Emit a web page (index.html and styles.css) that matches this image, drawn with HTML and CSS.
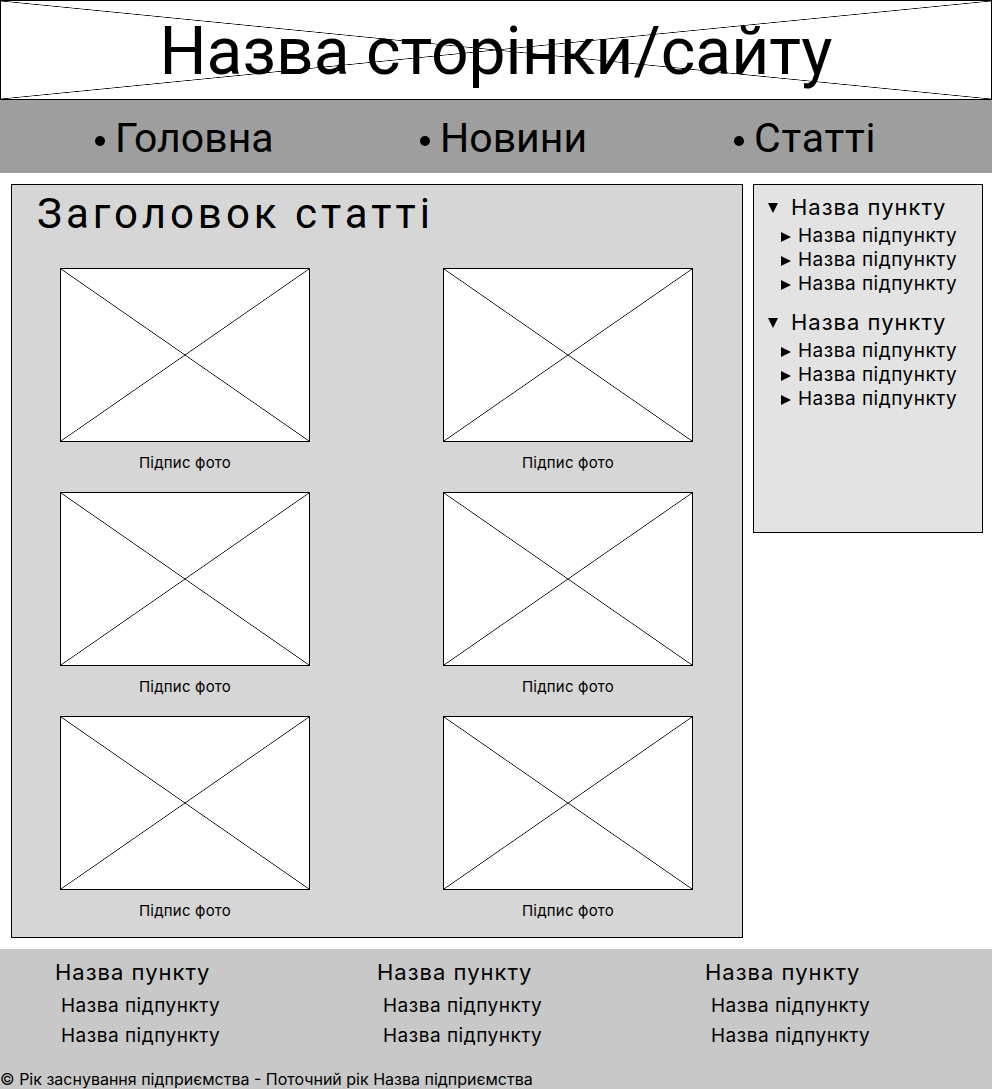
FILE: index.html
```html
<!DOCTYPE html>
<html lang="uk">
<head>
    <meta charset="UTF-8">
    <meta name="viewport" content="width=device-width, initial-scale=1.0">
    <title>Назва сторінки/сайту</title>
    <link rel="stylesheet" href="styles.css">
</head>
<body>

    <!-- Шапка -->
    <header class="site-header placeholder">
        <h1>Назва сторінки/сайту</h1>
    </header>

    <!-- Меню -->
    <nav class="main-nav">
        <ul>
            <li>Головна</li>
            <li>Новини</li>
            <li>Статті</li>
        </ul>
    </nav>

    <div class="layout">
        <!-- Стаття -->
        <main class="article">
            <h2>Заголовок статті</h2>
            <div class="gallery">
                <figure><div class="photo placeholder"></div><figcaption>Підпис фото</figcaption></figure>
                <figure><div class="photo placeholder"></div><figcaption>Підпис фото</figcaption></figure>
                <figure><div class="photo placeholder"></div><figcaption>Підпис фото</figcaption></figure>
                <figure><div class="photo placeholder"></div><figcaption>Підпис фото</figcaption></figure>
                <figure><div class="photo placeholder"></div><figcaption>Підпис фото</figcaption></figure>
                <figure><div class="photo placeholder"></div><figcaption>Підпис фото</figcaption></figure>
            </div>
        </main>

        <!-- Бічне меню -->
        <aside class="sidebar">
            <div class="group">
                <div class="group-title">Назва пункту</div>
                <ul>
                    <li>Назва підпункту</li>
                    <li>Назва підпункту</li>
                    <li>Назва підпункту</li>
                </ul>
            </div>
            <div class="group">
                <div class="group-title">Назва пункту</div>
                <ul>
                    <li>Назва підпункту</li>
                    <li>Назва підпункту</li>
                    <li>Назва підпункту</li>
                </ul>
            </div>
        </aside>
    </div>

    <!-- Підвал -->
    <footer class="site-footer">
        <div class="footer-cols">
            <div class="footer-col">
                <div class="footer-title">Назва пункту</div>
                <div class="footer-link">Назва підпункту</div>
                <div class="footer-link">Назва підпункту</div>
            </div>
            <div class="footer-col">
                <div class="footer-title">Назва пункту</div>
                <div class="footer-link">Назва підпункту</div>
                <div class="footer-link">Назва підпункту</div>
            </div>
            <div class="footer-col">
                <div class="footer-title">Назва пункту</div>
                <div class="footer-link">Назва підпункту</div>
                <div class="footer-link">Назва підпункту</div>
            </div>
        </div>
        <p class="copyright">© Рік заснування підприємства - Поточний рік Назва підприємства</p>
    </footer>

</body>
</html>
```

FILE: styles.css
```css
body {
    margin: 0;
    background-color: white;
    color: black;
    font-family: Inter, "Noto Sans", sans-serif;
}

ul {
    list-style: none;
    margin: 0;
    padding: 0;
}

/* перехрещений прямокутник-заглушка */
.placeholder {
    border: 1px solid black;
    background:
        linear-gradient(to top right, transparent calc(50% - 0.7px), #000 50%, transparent calc(50% + 0.7px)),
        linear-gradient(to bottom right, transparent calc(50% - 0.7px), #000 50%, transparent calc(50% + 0.7px)),
        white;
}

.site-header {
    height: 98px;
    display: flex;
    align-items: center;
    justify-content: center;
}

.site-header h1 {
    margin: 0;
    font-family: Roboto, sans-serif;
    font-weight: 400;
    font-size: 66px;
    line-height: 1;
    padding-top: 4px;
}

.main-nav {
    background-color: #9e9e9e;
    height: 73px;
    display: flex;
    align-items: center;
}

.main-nav ul {
    display: grid;
    grid-template-columns: 325px 314px auto;
    padding-left: 95px;
    padding-top: 2px;
}

.main-nav li {
    font-family: Roboto, sans-serif;
    font-size: 41px;
    display: flex;
    align-items: center;
}

.main-nav li:last-child {
    letter-spacing: 0.8px;
}

.main-nav li::before {
    content: "";
    width: 10px;
    height: 10px;
    border-radius: 50%;
    background-color: black;
    margin-right: 10px;
    margin-top: 6px;
}

.layout {
    display: flex;
    align-items: flex-start;
    gap: 10px;
    padding: 11px 0 11px 11px;
}

.article {
    width: 732px;
    height: 754px;
    box-sizing: border-box;
    background-color: #d6d6d6;
    border: 1px solid black;
    padding-top: 5px;
}

.article h2 {
    margin: 0 0 30px 25px;
    font-family: Roboto, sans-serif;
    font-weight: 400;
    font-size: 42px;
    line-height: 48px;
    letter-spacing: 4px;
}

.gallery {
    display: grid;
    grid-template-columns: 250px 250px;
    column-gap: 133px;
    justify-content: center;
    margin-left: -1px;
}

.gallery figure {
    margin: 0;
    height: 224px;
}

.photo {
    height: 172px;
}

.gallery figcaption {
    text-align: center;
    font-size: 15px;
    letter-spacing: 0.2px;
    margin-top: 11px;
}

.sidebar {
    width: 230px;
    height: 349px;
    box-sizing: border-box;
    background-color: #e3e3e3;
    border: 1px solid black;
    padding-top: 8px;
}

.group {
    margin-bottom: 12px;
}

.group-title {
    font-size: 22px;
    letter-spacing: 1px;
    line-height: 28px;
    padding-left: 14px;
    margin-bottom: 3px;
    display: flex;
    align-items: center;
}

.group-title::before {
    content: "";
    border-left: 5.5px solid transparent;
    border-right: 5.5px solid transparent;
    border-top: 10px solid black;
    margin-right: 13px;
    margin-top: 2px;
}

.sidebar li {
    font-size: 19px;
    letter-spacing: 0.5px;
    line-height: 24px;
    padding-left: 27px;
    display: flex;
    align-items: center;
}

.sidebar li::before {
    content: "";
    border-top: 5.5px solid transparent;
    border-bottom: 5.5px solid transparent;
    border-left: 10px solid black;
    margin-right: 7px;
    margin-top: 1px;
}

.site-footer {
    background-color: #c8c8c8;
    height: 140px;
    padding-top: 9px;
    box-sizing: border-box;
}

.footer-cols {
    display: grid;
    grid-template-columns: 322px 328px auto;
    padding-left: 55px;
}

.footer-title {
    font-size: 22px;
    letter-spacing: 1px;
    line-height: 28px;
    margin-bottom: 5px;
}

.footer-link {
    font-size: 19px;
    letter-spacing: 0.5px;
    line-height: 30px;
    padding-left: 6px;
}

.copyright {
    margin: 18px 0 0 0;
    font-size: 16px;
    line-height: 20px;
}
```
